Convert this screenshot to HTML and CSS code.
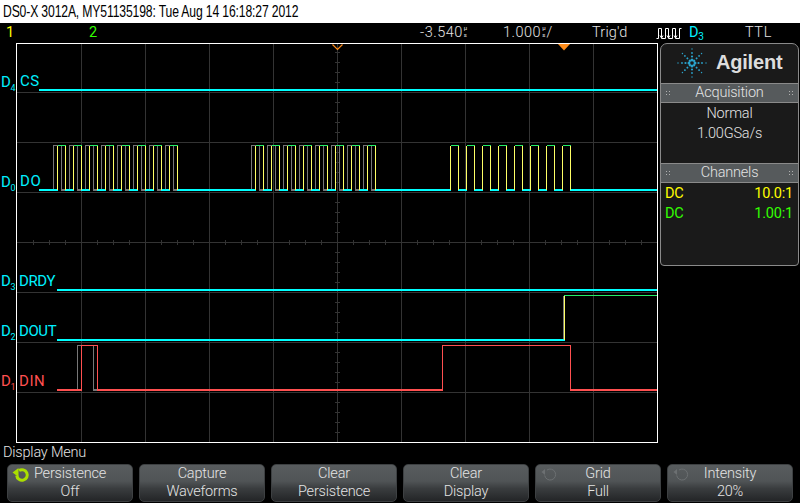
FILE: index.html
```html
<!DOCTYPE html>
<html lang="en">
<head>
<meta charset="utf-8">
<title>DSO-X 3012A</title>
<link rel="stylesheet" href="styles.css">
</head>
<body>
<header class="title"><span class="title-text">DS0-X 3012A, MY51135198: Tue Aug 14 16:18:27 2012</span></header>
<div class="status">
  <span class="st st-1 yellow">1</span>
  <span class="st st-2 green">2</span>
  <span class="st st-delay">-3.540<span class="unit"><span>µ</span><span>s</span></span></span>
  <span class="st st-time">1.000<span class="unit"><span>µ</span><span>s</span></span>/</span>
  <span class="st st-trig">Trig'd</span>
  <svg class="st-pulse" width="26" height="12" viewBox="0 0 26 12"><path d="M0.500 11.500H2.500V1.500H5.500V11.500H9.500V1.500H12.500V11.500H16.500V1.500H19.500V11.500H23.500V1.500H25.500M4 8.500L5.500 11L7 8.500M11 8.500L12.500 11L14 8.500M18 8.500L19.500 11L21 8.500"/></svg>
  <span class="st st-src cyan">D<sub>3</sub></span>
  <span class="st st-ttl">TTL</span>
</div>
<div class="middle">
  <svg class="plot" width="660" height="400" viewBox="0 43 660 400">
    <defs>
      <g id="gp">
        <path class="w-grey" d="M53.500 190V145.500H61.500V190"/>
        <path class="w-grey2" d="M61 190H65"/>
      </g>
      <g id="yp">
        <path class="w-green" d="M57.500 145.500H65.500"/>
        <path class="w-yellow" d="M57.500 190V145.500M65.500 145.500V190"/>
      </g>
      <g id="train">
        <use href="#gp"/><use href="#gp" x="16"/><use href="#gp" x="32"/><use href="#gp" x="48"/>
        <use href="#gp" x="64"/><use href="#gp" x="80"/><use href="#gp" x="96"/><use href="#gp" x="112"/>
        <path class="w-cyan" d="M65 190H74M81 190H90M97 190H106M113 190H122M129 190H138M145 190H154M161 190H170"/>
      </g>
      <g id="ytrain">
        <use href="#yp"/><use href="#yp" x="16"/><use href="#yp" x="32"/><use href="#yp" x="48"/>
        <use href="#yp" x="64"/><use href="#yp" x="80"/><use href="#yp" x="96"/><use href="#yp" x="112"/>
      </g>
    </defs>
    <path class="grid" d="M81.500 43V442M145.500 43V442M209.500 43V442M273.500 43V442M337.500 43V442M401.500 43V442M465.500 43V442M529.500 43V442M593.500 43V442"/>
    <path class="grid" d="M16 92.500H657M16 142.500H657M16 192.500H657M16 242.500H657M16 292.500H657M16 342.500H657M16 392.500H657"/>
    <path class="tick-v" d="M337.500 52V442"/>
    <path class="tick-h" d="M33 242.500H657"/>
    <path class="frame" d="M16.500 442.500V43.500H657.500V442.500H16.500"/>
    <path class="m-hollow" d="M332.500 44.500L337.500 49.500L342.500 44.500"/>
    <path class="m-solid" d="M558 44H570L564 50.500Z"/>

    <path class="w-cyan" d="M39 90H657"/>

    <use href="#train"/>
    <use href="#train" x="198"/>
    <path class="w-cyan" d="M39 190H58M177 190H256M375 190H451"/>
    <path class="w-cyan" d="M458 190H467M474 190H483M490 190H499M506 190H515M522 190H531M538 190H547M554 190H563M570 190H657"/>
    <use href="#ytrain"/>
    <use href="#ytrain" x="198"/>
    <use href="#ytrain" x="393"/>

    <path class="w-cyan" d="M57 290H657"/>
    <path class="w-grey" d="M563.500 340V295.500"/>
    <path class="w-cyan" d="M57 340H565"/>
    <path class="w-green" d="M564 295.500H657"/>
    <path class="w-yellow" d="M564.500 340V296"/>

    <path class="w-grey" d="M77.500 390V345.500H82M93.500 345.500V390"/>
    <path class="w-grey2" d="M93 390H98"/>
    <path class="w-red2" d="M57 390H82M97 390H443M570 390H657"/>
    <path class="w-red" d="M81.500 390V345.500H97.500V390M442.500 390V345.500H570.500V390"/>

    <text class="lbl cy" x="1" y="87">D<tspan class="sub" dy="4">4</tspan></text>
    <text class="lbl cy wide" x="20" y="86">CS</text>
    <text class="lbl cy" x="1" y="187">D<tspan class="sub" dy="4">0</tspan></text>
    <text class="lbl cy wide" x="20" y="186">DO</text>
    <text class="lbl cy" x="1" y="286">D<tspan class="sub" dy="4">3</tspan></text>
    <text class="lbl cy" x="19" y="286">DRDY</text>
    <text class="lbl cy" x="1" y="336">D<tspan class="sub" dy="4">2</tspan></text>
    <text class="lbl cy" x="19" y="336">DOUT</text>
    <text class="lbl rd" x="1" y="386">D<tspan class="sub" dy="4">1</tspan></text>
    <text class="lbl rd wide" x="19" y="386">DIN</text>
  </svg>
  <aside class="panel">
    <div class="brand">
      <svg class="logo" width="32" height="32" viewBox="-16 -16 32 32">
        <defs>
          <g id="ray"><circle cy="-3" r="1.500"/><circle cy="-6.500" r="1.100"/><circle cy="-10" r="0.900"/><circle cy="-14" r="0.700"/></g>
          <g id="dray"><circle cy="-3" r="1.200"/><circle cy="-6.500" r="1"/><circle cy="-10" r="0.900"/><circle cy="-13.500" r="0.700"/></g>
        </defs>
        <use href="#ray"/>
        <use href="#dray" transform="rotate(45)"/>
        <use href="#ray" transform="rotate(90)"/>
        <use href="#dray" transform="rotate(135)"/>
        <use href="#ray" transform="rotate(180)"/>
        <use href="#dray" transform="rotate(225)"/>
        <use href="#ray" transform="rotate(270)"/>
        <use href="#dray" transform="rotate(315)"/>
      </svg>
      <span class="brand-name">Agilent</span>
    </div>
    <div class="bar"><i class="grip"></i><span>Acquisition</span><i class="grip"></i></div>
    <div class="info">
      <div class="info-line">Normal</div>
      <div class="info-line">1.00GSa/s</div>
    </div>
    <div class="bar"><i class="grip"></i><span>Channels</span><i class="grip"></i></div>
    <div class="chan yellow"><span>DC</span><span>10.0:1</span></div>
    <div class="chan green"><span>DC</span><span>1.00:1</span></div>
  </aside>
</div>
<div class="menu-title">Display Menu</div>
<nav class="keys">
  <div class="key">
    <svg class="knob on" width="20" height="16" viewBox="0 0 20 16"><path class="arc" d="M7 3.600A5.300 5.300 0 1 1 4.700 8.500"/><path class="head" d="M0.500 5.500L6.500 1V10Z"/></svg>
    <div>Persistence</div><div>Off</div>
  </div>
  <div class="key"><div>Capture</div><div>Waveforms</div></div>
  <div class="key"><div>Clear</div><div>Persistence</div></div>
  <div class="key"><div>Clear</div><div>Display</div></div>
  <div class="key">
    <svg class="knob off" width="20" height="16" viewBox="0 0 20 16"><path class="arc" d="M7 3A5.500 5.500 0 1 1 4.700 8.500"/><path class="head" d="M1.500 5L5 2V8Z"/></svg>
    <div>Grid</div><div>Full</div>
  </div>
  <div class="key">
    <svg class="knob off" width="20" height="16" viewBox="0 0 20 16"><path class="arc" d="M7 3A5.500 5.500 0 1 1 4.700 8.500"/><path class="head" d="M1.500 5L5 2V8Z"/></svg>
    <div>Intensity</div><div>20%</div>
  </div>
</nav>
</body>
</html>
```
FILE: styles.css
```css
* { box-sizing: border-box; }
html, body { margin: 0; padding: 0; }
body {
  width: 800px;
  height: 503px;
  overflow: hidden;
  background: #000;
  color: #e4e4e4;
  font-family: Roboto, "Liberation Sans", sans-serif;
  font-weight: 300;
  font-size: 14.500px;
  letter-spacing: -0.2px;
}
.yellow { color: #ffff00; font-weight: 400; }
.green { color: #33ff00; font-weight: 400; }
.cyan { color: #00f0ff; font-weight: 400; }

.title {
  height: 23px;
  padding-left: 3px;
  background: #fff;
  color: #000;
  font-family: "Liberation Sans", sans-serif;
  font-weight: 400;
  font-size: 17px;
  line-height: 23px;
  letter-spacing: -0.2px;
  white-space: nowrap;
}
.title-text { display: inline-block; transform: scaleX(0.716); transform-origin: left center; }

.status {
  height: 20px;
  display: flex;
  align-items: center;
  line-height: 20px;
  white-space: nowrap;
}
.st { display: block; }
.st-1 { margin-left: 6px; width: 83px; }
.st-2 { width: 331px; }
.st-delay { width: 83px; letter-spacing: 0.5px; }
.st-time { width: 89px; letter-spacing: 0.5px; }
.st-trig { width: 64px; letter-spacing: 0.2px; }
.st-pulse { flex: none; fill: none; stroke: #fff; stroke-width: 1; }
.st-src { margin-left: 7px; width: 56px; }
.st-src sub { font-size: 10px; line-height: 0; vertical-align: -3px; }
.st-ttl { letter-spacing: 0.6px; }
.unit {
  display: inline-block;
  margin: 0 1px;
  font-size: 6px;
  font-weight: 400;
  line-height: 7px;
  letter-spacing: 0;
}
.unit span { display: block; }

.middle { height: 400px; display: flex; align-items: flex-start; }
.plot { display: block; flex: none; shape-rendering: crispEdges; }
.plot path { fill: none; }
.grid { stroke: #333; stroke-width: 1; }
.tick-v { stroke: #333; stroke-width: 5; stroke-dasharray: 1 9; }
.tick-h { stroke: #333; stroke-width: 5; stroke-dasharray: 1 15; }
.frame { stroke: #fff; stroke-width: 1; }
.plot .m-hollow { stroke: #ff8c1a; stroke-width: 1.200; shape-rendering: auto; }
.plot .m-solid { fill: #ff8c1a; shape-rendering: auto; }
.w-cyan { stroke: #00ffff; stroke-width: 2; }
.w-grey { stroke: #777; stroke-width: 1; }
.w-grey2 { stroke: #777; stroke-width: 2; }
.w-green { stroke: #22ee66; stroke-width: 1; }
.w-yellow { stroke: #ffff66; stroke-width: 1; }
.w-red { stroke: #ff5050; stroke-width: 1; }
.w-red2 { stroke: #ff5050; stroke-width: 2; }
.lbl {
  font-family: Roboto, sans-serif;
  font-weight: 400;
  font-size: 15px;
  letter-spacing: -0.4px;
}
.lbl.wide { letter-spacing: 0.6px; }
.cy { fill: #00f0ff; }
.rd { fill: #ff5050; }
.sub { font-size: 9px; }

.panel {
  width: 139px;
  height: 223px;
  flex: none;
  background: #1a1a1a;
  border: 1px solid #8a8a8a;
  border-radius: 7px 7px 4px 4px;
}
.brand { height: 39px; display: flex; align-items: center; padding: 0 0 1px 15px; }
.logo { fill: #2aa3cc; flex: none; }
.brand-name {
  margin: 0 0 1px 8px;
  font-family: "Liberation Sans", sans-serif;
  font-weight: bold;
  font-size: 20px;
  letter-spacing: -0.2px;
  color: #ddd;
}
.bar {
  height: 20px;
  display: flex;
  align-items: center;
  justify-content: space-between;
  padding: 0 4px;
  background: #565a5c;
  border-top: 1px solid #8a8a8a;
  border-bottom: 1px solid #8a8a8a;
  line-height: 20px;
}
.grip {
  width: 6px;
  height: 7px;
  background-image: radial-gradient(circle, #b0b0b0 0.800px, transparent 1px);
  background-size: 3px 3px;
}
.info { height: 60px; }
.info-line { height: 20px; line-height: 22px; text-align: center; }
.chan {
  height: 20px;
  line-height: 21px;
  display: flex;
  justify-content: space-between;
  padding: 0 5px 0 4px;
}

.menu-title { height: 21px; padding-left: 3px; line-height: 20px; }
.keys { display: flex; gap: 6px; padding-left: 7px; }
.key {
  position: relative;
  width: 126px;
  height: 38px;
  text-align: center;
  line-height: 18px;
  border: 1px solid #3d4042;
  border-radius: 5px;
  background: linear-gradient(#585c5e 0%, #505456 45%, #3a3d3f 65%, #232527 100%);
}
.knob { position: absolute; left: 4px; top: 2px; fill: none; }
.on .arc { stroke: #aade00; stroke-width: 3; }
.on .head { fill: #aade00; }
.off .arc { stroke: #6c7072; stroke-width: 1; }
.off .head { fill: #6c7072; }
```
